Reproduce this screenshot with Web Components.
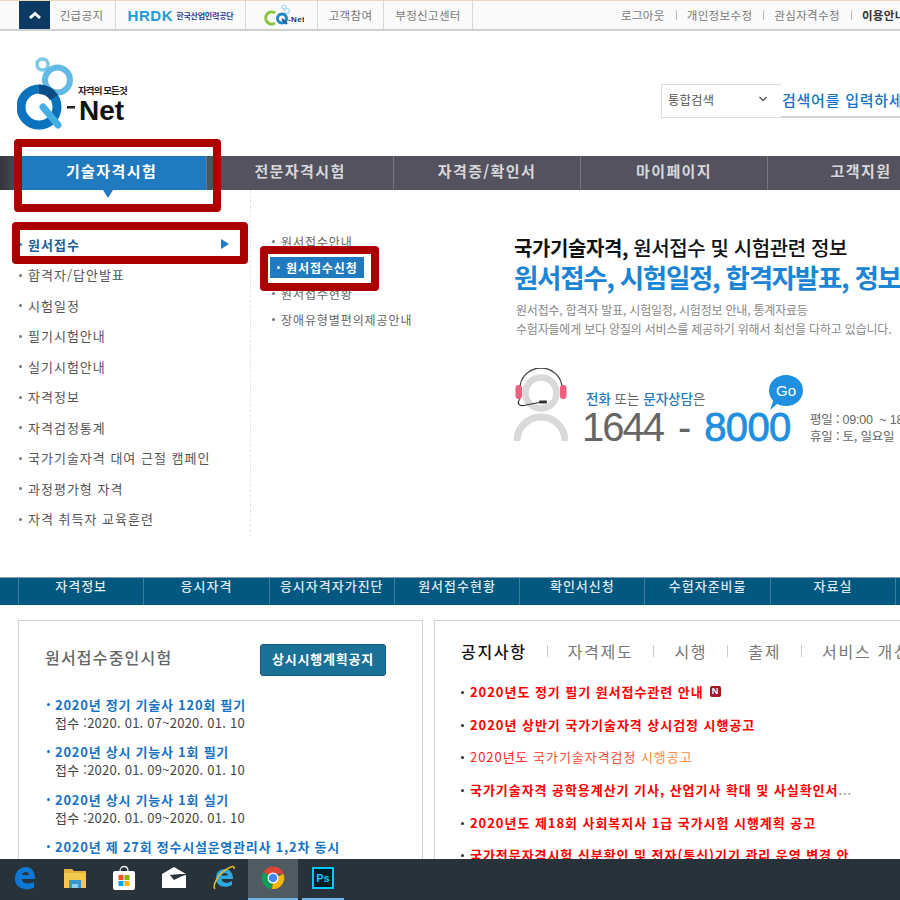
<!DOCTYPE html>
<html lang="ko">
<head>
<meta charset="utf-8">
<title>Q-Net</title>
<style>
    html, body { margin: 0; padding: 0; background: #fff; }
    body {
        width: 900px;
        height: 900px;
        overflow: hidden;
        display: flex;
        flex-direction: column;
        position: relative;
        font-family: "Noto Sans CJK KR", "Noto Sans", sans-serif;
    }
    q-annotation[data-n="1"] { left: 14px; top: 139px; width: 207px; height: 73px; }
    q-annotation[data-n="2"] { left: 12px; top: 222px; width: 236px; height: 42px; }
    q-annotation[data-n="3"] { left: 260px; top: 246px; width: 119px; height: 45px; }
</style>
</head>
<body>
<q-topbar></q-topbar>
<q-header></q-header>
<q-gnb></q-gnb>
<q-megamenu></q-megamenu>
<q-quicklinks></q-quicklinks>
<q-panels></q-panels>
<q-taskbar></q-taskbar>
<q-annotation data-n="1"></q-annotation>
<q-annotation data-n="2"></q-annotation>
<q-annotation data-n="3"></q-annotation>

<script>
const FONT = `"Noto Sans CJK KR", "Noto Sans", sans-serif`;

class QTopbar extends HTMLElement {
    constructor() {
        super();
        this.attachShadow({ mode: 'open' });
        this.shadowRoot.innerHTML = `
            <style>
                :host {
                    display: flex;
                    flex: none;
                    height: 28px;
                    padding-left: 19px;
                    background: #fafafa;
                    border-top: 1px solid #e6d9bd;
                    border-bottom: 2px solid #cfcfcf;
                    font: 11.5px ${FONT};
                    color: #777;
                    letter-spacing: .35px;
                    white-space: nowrap;
                    overflow: hidden;
                }
                .up { flex: none; width: 31px; background: #0d3a63; display: flex; align-items: center; justify-content: center; }
                .cell { flex: none; display: flex; align-items: center; justify-content: center; border-right: 1px solid #d8d8d8; box-sizing: border-box; }
                .notice { width: 66px; padding-right: 2px; }
                .hrdk { width: 130px; gap: 3px; color: #1f3f95; }
                .hrdk b { font: bold 15px "Liberation Sans", sans-serif; color: #1f9ad6; letter-spacing: .6px; }
                .hrdk span { font-size: 8px; font-weight: 700; letter-spacing: -.2px; }
                .cq { width: 72px; }
                .help { width: 66px; }
                .report { width: 89px; }
                .right { flex: none; display: flex; align-items: center; padding-left: 148px; }
                .right i { font-style: normal; width: 1px; height: 10px; background: #bbb; margin: 0 10px 0 11px; }
                .right b { color: #333; }
            </style>
            <div class="up"><svg width="14" height="10" viewBox="0 0 14 10"><path d="M2 8 L7 3.5 L12 8" fill="none" stroke="#fff" stroke-width="3"/></svg></div>
            <div class="cell notice">긴급공지</div>
            <div class="cell hrdk"><b>HRDK</b><span>한국산업인력공단</span></div>
            <div class="cell cq">
                <svg width="44" height="26" viewBox="0 0 44 26">
                    <circle cx="24" cy="5" r="2" fill="none" stroke="#a8d8ee" stroke-width="1.2"/>
                    <circle cx="27" cy="9" r="2.5" fill="none" stroke="#a8d8ee" stroke-width="1.2"/>
                    <path d="M15 11 A6 6 0 1 0 15 21" fill="none" stroke="#8cc63f" stroke-width="3"/>
                    <circle cx="22" cy="16.5" r="4.5" fill="none" stroke="#1f86c8" stroke-width="3"/>
                    <path d="M22 17 L27 22" stroke="#1f5f95" stroke-width="2"/>
                    <text x="28" y="20" font-family="Liberation Sans" font-size="8" font-weight="bold" fill="#333">-Net</text>
                </svg>
            </div>
            <div class="cell help">고객참여</div>
            <div class="cell report">부정신고센터</div>
            <div class="right">로그아웃<i></i>개인정보수정<i></i>관심자격수정<i></i><b>이용안내</b></div>
        `;
    }
}

class QHeader extends HTMLElement {
    constructor() {
        super();
        this.attachShadow({ mode: 'open' });
        this.shadowRoot.innerHTML = `
            <style>
                :host {
                    display: flex;
                    flex: none;
                    height: 125px;
                    justify-content: space-between;
                    box-sizing: border-box;
                    padding: 24px 0 0 17px;
                    white-space: nowrap;
                    overflow: hidden;
                }
                .search { display: flex; height: 34px; margin-top: 29px; width: 239px; font-family: ${FONT}; }
                .select {
                    width: 120px;
                    box-sizing: border-box;
                    flex: none;
                    border: 1px solid #dcdcdc;
                    border-right: 0;
                    display: flex;
                    align-items: center;
                    justify-content: space-between;
                    padding: 0 14px 4px 6px;
                    font-size: 12.5px;
                    color: #555;
                }
                .input {
                    flex: 1;
                    color: #1673c5;
                    font-size: 15px;
                    letter-spacing: .75px;
                    font-weight: 500;
                    border-bottom: 2px solid #d4d4d4;
                    padding-left: 1px;
                    line-height: 31px;
                    overflow: hidden;
                }
            </style>
            <svg width="115" height="80" viewBox="0 0 115 80">
                <circle cx="25.5" cy="9.5" r="5.5" fill="none" stroke="#7ec8ea" stroke-width="3.5"/>
                <circle cx="40.5" cy="25" r="12.5" fill="none" stroke="#62b9e6" stroke-width="6"/>
                <circle cx="22" cy="52" r="18" fill="none" stroke="#0b72bd" stroke-width="9"/>
                <path d="M22 29.5 A22.500 22.500 0 0 1 41 40 L33 45 A13 13 0 0 0 22 39Z" fill="#0a4c86"/>
                <path d="M26 52 L41 70" stroke="#45aee2" stroke-width="7" stroke-linecap="round"/>
                <text x="61" y="39" font-family="Noto Sans CJK KR" font-size="9.5" font-weight="700" letter-spacing="-.9" fill="#222">자격의 모든것</text>
                <rect x="50" y="51" width="8" height="2.5" fill="#222"/>
                <text x="62" y="65" font-family="Liberation Sans" font-size="28" font-weight="bold" fill="#111">Net</text>
            </svg>
            <div class="search">
                <div class="select">통합검색
                    <svg width="8" height="6" viewBox="0 0 8 6"><path d="M.5 1 L4 4.5 L7.5 1" fill="none" stroke="#555" stroke-width="1.3"/></svg>
                </div>
                <div class="input">검색어를 입력하세요</div>
            </div>
        `;
    }
}

class QGnb extends HTMLElement {
    constructor() {
        super();
        this.attachShadow({ mode: 'open' });
        const items = ['기술자격시험', '전문자격시험', '자격증/확인서', '마이페이지', '고객지원'];
        this.shadowRoot.innerHTML = `
            <style>
                :host {
                    display: flex;
                    flex: none;
                    height: 34px;
                    padding-left: 22px;
                    background: #53525e;
                    font: 700 15px ${FONT};
                    color: #d8d8dc;
                    letter-spacing: 1.4px;
                    white-space: nowrap;
                    position: relative;
                    background-image: linear-gradient(90deg, #35353b, #53525e 22px);
                }
                .item {
                    flex: none;
                    width: 187px;
                    box-sizing: border-box;
                    display: flex;
                    align-items: center;
                    justify-content: center;
                    padding: 0 0 5px 0;
                    border-right: 1px solid #77767f;
                    position: relative;
                }
                .on { width: 185px; padding-right: 5px; background: #1f7abf; background-clip: padding-box; color: #fff; }
                .on::after {
                    content: "";
                    position: absolute;
                    left: 81px;
                    bottom: -8px;
                    border: 5px solid transparent;
                    border-top: 8px solid #1f7abf;
                    border-bottom: 0;
                }
            </style>
            ${items.map((t, i) => `<div class="item ${i === 0 ? 'on' : ''}">${t}</div>`).join('')}
        `;
    }
}

class QMegamenu extends HTMLElement {
    constructor() {
        super();
        this.attachShadow({ mode: 'open' });
        const left = ['원서접수', '합격자/답안발표', '시험일정', '필기시험안내', '실기시험안내', '자격정보', '자격검정통계', '국가기술자격 대여 근절 캠페인', '과정평가형 자격', '자격 취득자 교육훈련'];
        const sub = ['원서접수안내', '원서접수신청', '원서접수현황', '장애유형별편의제공안내'];
        this.shadowRoot.innerHTML = `
            <style>
                :host {
                    display: flex;
                    flex: none;
                    height: 387px;
                    font-family: ${FONT};
                    white-space: nowrap;
                    overflow: hidden;
                }
                ul { list-style: none; margin: 0; padding: 0; }
                li { display: flex; align-items: center; position: relative; }
                li::before { content: ""; position: absolute; width: 3px; height: 3px; background: #777; border-radius: 50%; }
                .left {
                    width: 251px;
                    flex: none;
                    box-sizing: border-box;
                    height: 347px;
                    padding: 39px 0 0 28px;
                    border-right: 1px dashed #e4e4e4;
                    font-size: 13px;
                    color: #555;
                    letter-spacing: 1px;
                }
                .left li { height: 30.5px; }
                .left li::before { left: -9px; top: 14px; }
                .left .on { color: #1a5c99; font-weight: 700; }
                .left .on::before { background: #1f7abf; }
                .left .on::after {
                    content: "";
                    position: absolute;
                    left: 193px;
                    top: 10px;
                    border: 5px solid transparent;
                    border-left: 8px solid #1f7abf;
                    border-right: 0;
                }
                .sub {
                    width: 249px;
                    flex: none;
                    box-sizing: border-box;
                    padding: 38px 0 0 19px;
                    font-size: 12px;
                    color: #666;
                    letter-spacing: .9px;
                }
                .sub ul { display: grid; grid-auto-rows: 26px; grid-template-columns: 94px; }
                .sub li { padding-left: 11px; height: 21px; align-self: center; }
                .sub li::before { left: 2px; top: 9px; }
                .sub .on { background: #1f7abf; color: #fff; font-weight: 700; padding-left: 16px; }
                .sub .on::before { left: 7px; background: #fff; }
                .promo { flex: 1; min-width: 0; padding: 44px 0 0 14px; overflow: hidden; }
                .t1 { font-size: 20px; font-weight: 500; color: #111; line-height: 28px; letter-spacing: -.4px; }
                .t1 b { font-weight: 700; }
                .t2 { font-size: 26.5px; font-weight: 700; color: #1a85d6; line-height: 30px; letter-spacing: -1.3px; width: 500px; }
                .t3 { font-size: 12px; color: #888; line-height: 19px; margin: 8px 0 0 2px; letter-spacing: -.2px; width: 420px; }
                .contact { display: flex; margin-top: 30px; width: 420px; height: 78px; }
                .tel { position: relative; width: 226px; margin-left: 15px; flex: none; }
                .tel .q { font-size: 13.5px; line-height: 20px; color: #666; position: absolute; left: 2px; top: 20px; }
                .tel .q b { color: #1f7abf; font-weight: 500; }
                .tel .n { position: absolute; left: -2px; top: 42px; font: 40px/34px "Liberation Sans", sans-serif; color: #666; letter-spacing: -2px; }
                .tel .n b { color: #1f8fe0; letter-spacing: -.7px; font-weight: 400; -webkit-text-stroke: .8px #1f8fe0; margin-left: 13px; }
                .tel .n i { font-style: normal; margin-left: 15px; letter-spacing: 0; }
                .go {
                    position: absolute;
                    left: 185px;
                    top: 7px;
                    width: 34px;
                    height: 31px;
                    border-radius: 50%;
                    background: #1f8fe0;
                    color: #fff;
                    font: 15px/31px "Liberation Sans", sans-serif;
                    text-align: center;
                }
                .go::after {
                    content: "";
                    position: absolute;
                    left: 1px;
                    top: 24px;
                    width: 13px;
                    height: 11px;
                    background: #1f8fe0;
                    clip-path: polygon(100% 0, 0 100%, 30% 0);
                }
                .hours { font-size: 12.5px; line-height: 16px; color: #666; padding-top: 43px; letter-spacing: -.2px; }
                .hours .en { font-family: "Liberation Sans", sans-serif; }
            </style>
            <div class="left"><ul>${left.map((t, i) => `<li class="${i === 0 ? 'on' : ''}">${t}</li>`).join('')}</ul></div>
            <div class="sub"><ul>${sub.map((t, i) => `<li class="${i === 1 ? 'on' : ''}">${t}</li>`).join('')}</ul></div>
            <div class="promo">
                <div class="t1"><b>국가기술자격,</b> 원서접수 및 시험관련 정보</div>
                <div class="t2">원서접수, 시험일정, 합격자발표, 정보</div>
                <div class="t3">원서접수, 합격자 발표, 시험일정, 시험정보 안내, 통계자료등<br>수험자들에게 보다 양질의 서비스를 제공하기 위해서 최선을 다하고 있습니다.</div>
                <div class="contact">
                    <svg width="55" height="76" viewBox="0 0 55 76" style="flex:none">
                        <circle cx="27" cy="25" r="15.5" fill="none" stroke="#d9d9d9" stroke-width="6.5"/>
                        <path d="M3 73 A24 24 0 0 1 51 73" fill="none" stroke="#d9d9d9" stroke-width="7"/>
                        <path d="M6 20 A21 20 0 0 1 48 20" fill="none" stroke="#444" stroke-width="1.3"/>
                        <rect x="1.5" y="17" width="6.5" height="14" rx="3.2" fill="#f0607e"/>
                        <rect x="46" y="17" width="6.5" height="14" rx="3.2" fill="#f0607e"/>
                        <path d="M6 31 C2 36 6 39 12 37 L28 34" fill="none" stroke="#333" stroke-width="1.2"/>
                        <rect x="25" y="32.5" width="8" height="3" rx="1" fill="#333"/>
                    </svg>
                    <div class="tel">
                        <div class="q"><b>전화</b> 또는 <b>문자상담</b>은</div>
                        <div class="n">1644<i>-</i><b>8000</b></div>
                        <div class="go">Go</div>
                    </div>
                    <div class="hours">평일 : <span class="en">09:00&nbsp; ~ 18:00</span><br>휴일 : 토, 일요일</div>
                </div>
            </div>
        `;
    }
}

class QQuicklinks extends HTMLElement {
    constructor() {
        super();
        this.attachShadow({ mode: 'open' });
        const items = ['자격정보', '응시자격', '응시자격자가진단', '원서접수현황', '확인서신청', '수험자준비물', '자료실'];
        this.shadowRoot.innerHTML = `
            <style>
                :host {
                    display: flex;
                    flex: none;
                    height: 27px;
                    padding-left: 18px;
                    background: #03587f;
                    border-top: 1px solid #8a9aa5;
                    color: #dfe9ef;
                    font: 500 13px/16px ${FONT};
                    letter-spacing: 1px;
                    white-space: nowrap;
                    overflow: hidden;
                }
                div {
                    flex: none;
                    width: 125.3px;
                    box-sizing: border-box;
                    text-align: center;
                    border-left: 1px solid #3d7e9f;
                }
            </style>
            ${items.map(t => `<div>${t}</div>`).join('')}<div></div>
        `;
    }
}

class QPanels extends HTMLElement {
    constructor() {
        super();
        this.attachShadow({ mode: 'open' });
        this.shadowRoot.innerHTML = `
            <style>
                :host {
                    display: flex;
                    flex: none;
                    gap: 11px;
                    height: 254px;
                    box-sizing: border-box;
                    padding: 15px 0 0 18px;
                    overflow: hidden;
                }
            </style>
            <q-exam-panel></q-exam-panel>
            <q-notice-panel></q-notice-panel>
        `;
    }
}

class QExamPanel extends HTMLElement {
    constructor() {
        super();
        this.attachShadow({ mode: 'open' });
        const exams = [
            ['2020년 정기 기술사 120회 필기', '접수 :2020. 01. 07~2020. 01. 10'],
            ['2020년 상시 기능사 1회 필기', '접수 :2020. 01. 09~2020. 01. 10'],
            ['2020년 상시 기능사 1회 실기', '접수 :2020. 01. 09~2020. 01. 10'],
            ['2020년 제 27회 정수시설운영관리사 1,2차 동시', '']
        ];
        this.shadowRoot.innerHTML = `
            <style>
                :host {
                    display: block;
                    flex: none;
                    width: 405px;
                    height: 260px;
                    box-sizing: border-box;
                    border: 1px solid #d2d2d2;
                    padding: 23px 0 0 26px;
                    font-family: ${FONT};
                    white-space: nowrap;
                }
                .head { display: flex; align-items: center; width: 341px; justify-content: space-between; height: 32px; }
                h2 { margin: 0 0 6px; font-size: 16px; font-weight: 500; color: #666; letter-spacing: 1.2px; }
                .btn {
                    width: 126px;
                    height: 32px;
                    box-sizing: border-box;
                    background: #1a7097;
                    border: 1px solid #16607f;
                    border-radius: 3px;
                    color: #fff;
                    font-size: 13px;
                    font-weight: 700;
                    line-height: 27px;
                    text-align: center;
                    letter-spacing: .8px;
                }
                ul { list-style: none; margin: 20px 0 0; padding: 0 0 0 10px; }
                li { height: 47.4px; position: relative; }
                li::before { content: ""; position: absolute; left: -8px; top: 7px; width: 3px; height: 3px; border-radius: 50%; background: #1673c5; }
                .t { font-size: 13px; font-weight: 700; color: #1673c5; line-height: 18px; letter-spacing: .75px; }
                .d { font-size: 13px; color: #444; line-height: 18px; letter-spacing: .24px; }
            </style>
            <div class="head"><h2>원서접수중인시험</h2><div class="btn">상시시행계획공지</div></div>
            <ul>${exams.map(e => `<li><div class="t">${e[0]}</div><div class="d">${e[1]}</div></li>`).join('')}</ul>
        `;
    }
}

class QNoticePanel extends HTMLElement {
    constructor() {
        super();
        this.attachShadow({ mode: 'open' });
        this.shadowRoot.innerHTML = `
            <style>
                :host {
                    display: block;
                    flex: none;
                    width: 520px;
                    height: 260px;
                    box-sizing: border-box;
                    border: 1px solid #d2d2d2;
                    padding: 19px 0 0 26px;
                    font-family: ${FONT};
                    white-space: nowrap;
                }
                .tabs { display: flex; align-items: center; height: 22px; font-size: 16px; color: #777; letter-spacing: 1.7px; }
                .tabs b { color: #111; font-weight: 500; }
                .tabs i { width: 1px; height: 12px; background: #ccc; margin: 0 20px; }
                ul { list-style: none; margin: 18px 0 0; padding: 0 0 0 9px; }
                li {
                    height: 32.7px;
                    line-height: 24px;
                    font-size: 13px;
                    font-weight: 700;
                    color: #f00;
                    letter-spacing: .95px;
                    position: relative;
                    display: flex;
                    align-items: flex-start;
                }
                li::before { content: ""; position: absolute; left: -9px; top: 11px; width: 3px; height: 3px; border-radius: 50%; background: #333; }
                .new {
                    width: 11px;
                    height: 11px;
                    margin: 6px 0 0 6px;
                    background: #a01c1c;
                    border-radius: 2px;
                    color: #fff;
                    font: bold 9px/11px "Liberation Sans", sans-serif;
                    text-align: center;
                    letter-spacing: 0;
                }
                .soft { font-weight: 400; color: #f22; }
                .soft span { color: #f5503a; }
                .soft em { color: #fb8a40; font-style: normal; }
                .more { color: #888; font-weight: 400; }
            </style>
            <div class="tabs"><b>공지사항</b><i></i>자격제도<i></i>시행<i></i>출제<i></i>서비스 개선</div>
            <ul>
                <li>2020년도 정기 필기 원서접수관련 안내<span class="new">N</span></li>
                <li>2020년 상반기 국가기술자격 상시검정 시행공고</li>
                <li class="soft">2020년도&nbsp;<span>국가기술자격검정</span>&nbsp;<em>시행공고</em></li>
                <li>국가기술자격 공학용계산기 기사, 산업기사 확대 및 사실확인서<span class="more">...</span></li>
                <li>2020년도 제18회 사회복지사 1급 국가시험 시행계획 공고</li>
                <li>국가전문자격시험 신분확인 및 전자(통신)기기 관리 운영 변경 안</li>
            </ul>
        `;
    }
}

class QTaskbar extends HTMLElement {
    constructor() {
        super();
        this.attachShadow({ mode: 'open' });
        this.shadowRoot.innerHTML = `
            <style>
                :host {
                    display: flex;
                    flex: none;
                    height: 41px;
                    background: #27323a;
                    position: relative;
                    z-index: 1;
                }
                .slot { width: 49.7px; flex: none; display: flex; align-items: center; justify-content: center; box-sizing: border-box; padding-bottom: 4px; }
                .active { background: #4f5a61; border-bottom: 2px solid #76b4e4; padding-bottom: 2px; }
                .open { position: relative; }
                .open::after { content: ""; position: absolute; left: 4px; right: 4px; bottom: 0; height: 2px; background: #76b4e4; }
                .ps {
                    width: 18px;
                    height: 18px;
                    background: #001d26;
                    border: 2px solid #00c8ff;
                    color: #00c8ff;
                    font: bold 11px/18px "Liberation Sans", sans-serif;
                    text-align: center;
                }
            </style>
            <div class="slot">
                <svg width="22" height="24" viewBox="0 0 22 24"><path d="M1 13 C1 5 6 1 12 1 C18 1 21 6 21 13 L8 13 C8 17 13 19 20 16 L20 22 C11 25 1 22 1 13Z M8 9 L15 9 C15 5 9 5 8 9Z" fill="#0f78d4" fill-rule="evenodd"/></svg>
            </div>
            <div class="slot">
                <svg width="24" height="22" viewBox="0 0 24 22"><path d="M1 2 H9 L11 4 H23 V21 H1Z" fill="#e6b13f"/><rect x="1" y="6" width="22" height="15" fill="#f2c94f"/><rect x="6" y="13" width="12" height="8" fill="#3a97d4"/><rect x="9" y="17" width="6" height="4" fill="#8fd0f0"/></svg>
            </div>
            <div class="slot">
                <svg width="24" height="26" viewBox="0 0 24 26"><path d="M8 6 C8 0 16 0 16 6" fill="none" stroke="#eee" stroke-width="1.3"/><rect x="1" y="6" width="22" height="19" rx="2" fill="#fff"/><rect x="6.5" y="10" width="5" height="5" fill="#f25022"/><rect x="12.5" y="10" width="5" height="5" fill="#7fba00"/><rect x="6.5" y="16" width="5" height="5" fill="#00a4ef"/><rect x="12.5" y="16" width="5" height="5" fill="#ffb900"/></svg>
            </div>
            <div class="slot">
                <svg width="26" height="22" viewBox="0 0 26 22"><path d="M1 7 L13 0 L25 7 L25 7 L9 8 L13 11 L25 8 V21 H1Z" fill="#fff"/><path d="M9 8 L25 7 L13 13Z" fill="#27323a"/></svg>
            </div>
            <div class="slot">
                <svg width="24" height="26" viewBox="0 0 24 26">
                    <path d="M4 13 C4 7 8 4 13 4 C18 4 21 8 21 14 L9.5 14 C10 18 15 19 20 16 L20 20 C12 24 4 21 4 13Z M9.5 10.5 L16 10.5 C15.5 7 10 7 9.5 10.5Z" fill="#2ea8e0" fill-rule="evenodd"/>
                    <path d="M3 24 C0 21 6 9 15 4 C19 1.5 23 0 22 4" fill="none" stroke="#e8b520" stroke-width="1.6"/>
                </svg>
            </div>
            <div class="slot active">
                <svg width="24" height="24" viewBox="0 0 24 24">
                    <path d="M12 12 L2.5 6 A11 11 0 0 1 22.500 8 L12 8Z" fill="#db4437"/>
                    <path d="M12 12 L22.5 8 A11 11 0 0 1 11 23Z" fill="#f4b400"/>
                    <path d="M12 12 L11 23 A11 11 0 0 1 2.5 6Z" fill="#0f9d58"/>
                    <circle cx="12" cy="12" r="5.5" fill="#fff"/>
                    <circle cx="12" cy="12" r="4.2" fill="#4285f4"/>
                </svg>
            </div>
            <div class="slot open"><div class="ps">Ps</div></div>
        `;
    }
}

class QAnnotation extends HTMLElement {
    constructor() {
        super();
        this.attachShadow({ mode: 'open' });
        this.shadowRoot.innerHTML = `
            <style>
                :host {
                    display: block;
                    position: absolute;
                    box-sizing: border-box;
                    border: 8px solid #ab0000;
                    border-radius: 4px;
                    pointer-events: none;
                }
            </style>
        `;
    }
}

customElements.define('q-topbar', QTopbar);
customElements.define('q-header', QHeader);
customElements.define('q-gnb', QGnb);
customElements.define('q-megamenu', QMegamenu);
customElements.define('q-quicklinks', QQuicklinks);
customElements.define('q-panels', QPanels);
customElements.define('q-exam-panel', QExamPanel);
customElements.define('q-notice-panel', QNoticePanel);
customElements.define('q-taskbar', QTaskbar);
customElements.define('q-annotation', QAnnotation);
</script>
</body>
</html>
